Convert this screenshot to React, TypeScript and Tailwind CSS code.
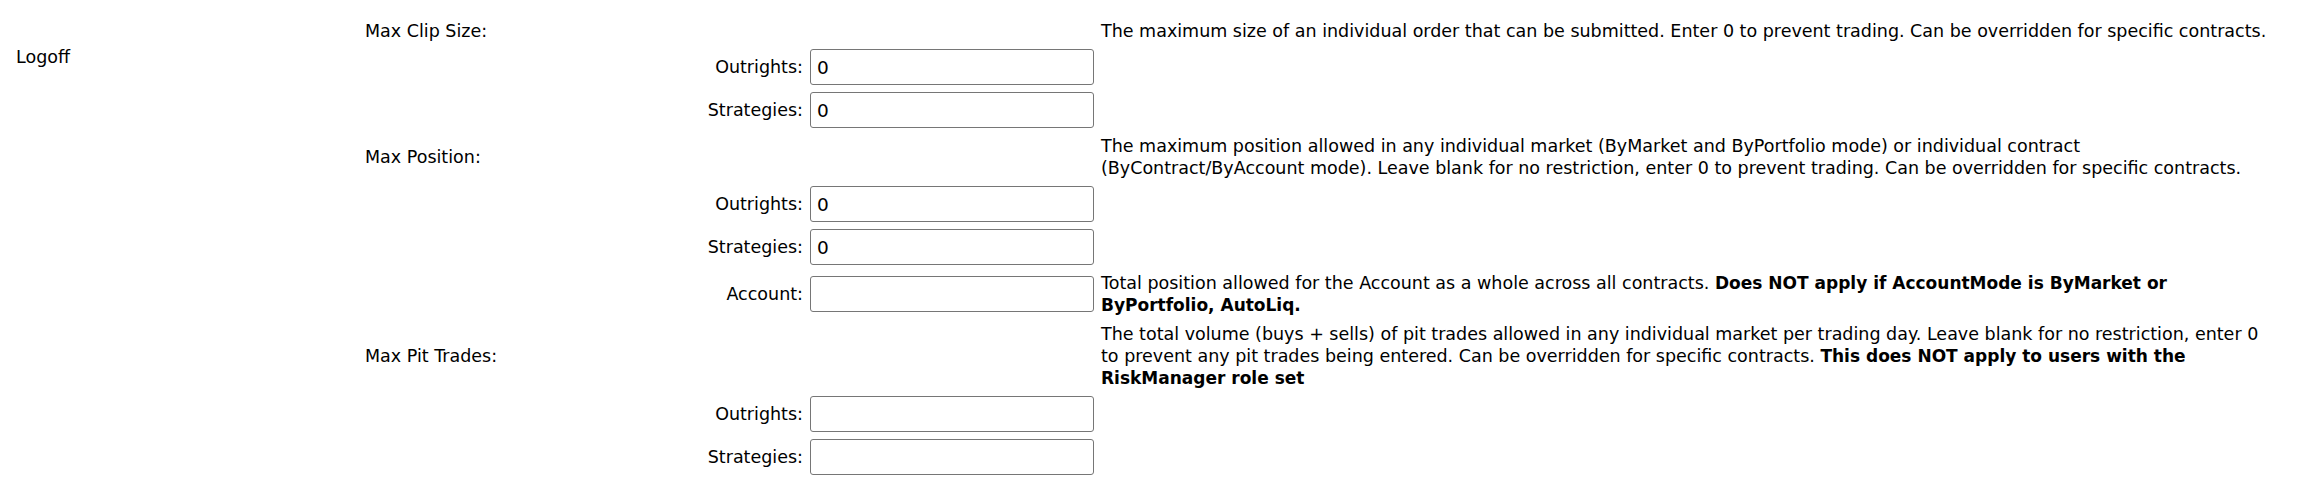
import React from 'react';

type Row =
  | { kind: 'head'; label: string; desc: React.ReactNode[] }
  | { kind: 'field'; label: string; value: string; desc?: React.ReactNode[] };

const B: React.FC<{ children: React.ReactNode }> = ({ children }) => (
  <b className="font-bold text-[17px]">{children}</b>
);

const rows: Row[] = [
  {
    kind: 'head',
    label: 'Max Clip Size:',
    desc: ['The maximum size of an individual order that can be submitted. Enter 0 to prevent trading. Can be overridden for specific contracts.'],
  },
  { kind: 'field', label: 'Outrights:', value: '0' },
  { kind: 'field', label: 'Strategies:', value: '0' },
  {
    kind: 'head',
    label: 'Max Position:',
    desc: [
      'The maximum position allowed in any individual market (ByMarket and ByPortfolio mode) or individual contract',
      '(ByContract/ByAccount mode). Leave blank for no restriction, enter 0 to prevent trading. Can be overridden for specific contracts.',
    ],
  },
  { kind: 'field', label: 'Outrights:', value: '0' },
  { kind: 'field', label: 'Strategies:', value: '0' },
  {
    kind: 'field',
    label: 'Account:',
    value: '',
    desc: [
      <>
        Total position allowed for the Account as a whole across all contracts.{' '}
        <B>Does NOT apply if AccountMode is ByMarket or</B>
      </>,
      <B>ByPortfolio, AutoLiq.</B>,
    ],
  },
  {
    kind: 'head',
    label: 'Max Pit Trades:',
    desc: [
      'The total volume (buys + sells) of pit trades allowed in any individual market per trading day. Leave blank for no restriction, enter 0',
      <>
        to prevent any pit trades being entered. Can be overridden for specific contracts.{' '}
        <B>This does NOT apply to users with the</B>
      </>,
      <B>RiskManager role set</B>,
    ],
  },
  { kind: 'field', label: 'Outrights:', value: '' },
  { kind: 'field', label: 'Strategies:', value: '' },
];

const Desc: React.FC<{ lines?: React.ReactNode[] }> = ({ lines }) => (
  <div className="flex flex-col justify-center">
    {lines?.map((l, i) => (
      <span key={i} className="block whitespace-nowrap">
        {l}
      </span>
    ))}
  </div>
);

const App: React.FC = () => {
  return (
    <div
      className="min-h-screen bg-white text-black text-[17.5px] leading-[22px] flex"
      style={{ fontFamily: 'Verdana, "DejaVu Sans", sans-serif' }}
    >
      <div className="w-[365px] shrink-0 pt-[46px] pl-[16px]">
        <span>Logoff</span>
      </div>
      <div className="grid grid-cols-[438px_284px_1fr] gap-x-[7px] gap-y-[7px] pt-[20px] content-start">
        {rows.map((r, i) =>
          r.kind === 'head' ? (
            <React.Fragment key={i}>
              <div className="flex items-center">{r.label}</div>
              <div />
              <Desc lines={r.desc} />
            </React.Fragment>
          ) : (
            <React.Fragment key={i}>
              <div className="flex items-center justify-end">{r.label}</div>
              <div className="flex items-center">
                <input
                  type="text"
                  defaultValue={r.value}
                  className="h-[36px] w-[284px] border border-[#767676] rounded-[3px] px-[6px] bg-white text-[18.5px] text-black outline-none"
                  style={{ fontFamily: 'Verdana, "DejaVu Sans", sans-serif' }}
                />
              </div>
              <Desc lines={r.desc} />
            </React.Fragment>
          )
        )}
      </div>
    </div>
  );
};

export default App;
